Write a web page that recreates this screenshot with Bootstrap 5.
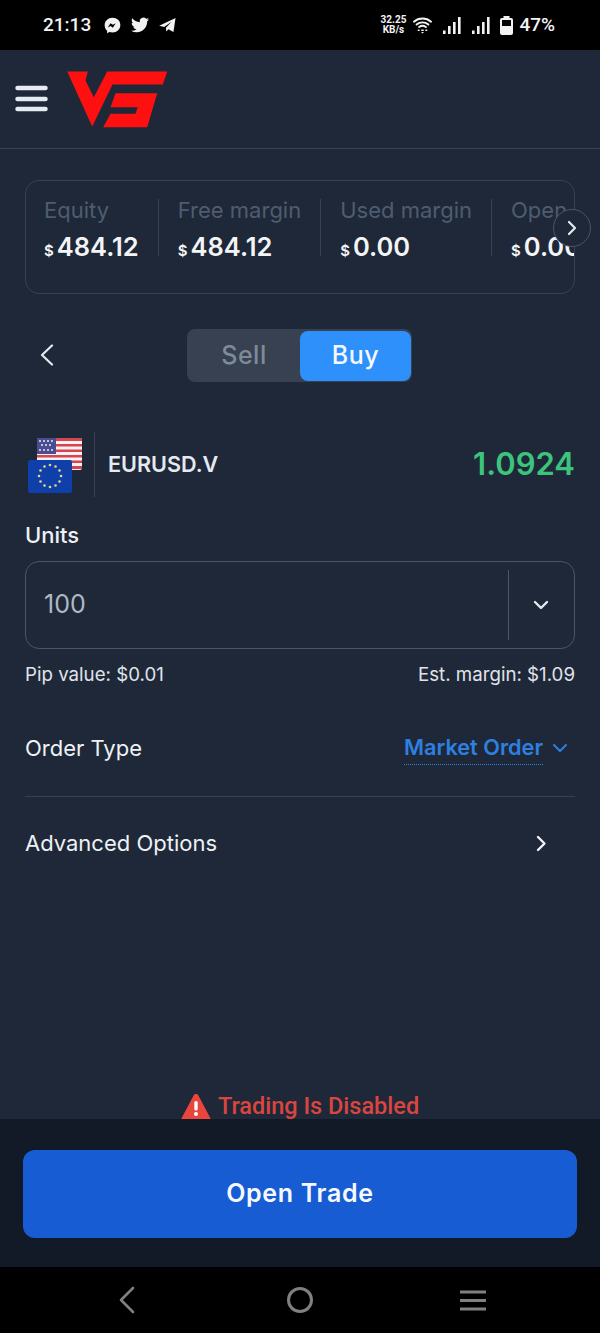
<!DOCTYPE html>
<html lang="en">
<head>
  <meta charset="UTF-8">
  <meta name="viewport" content="width=device-width, initial-scale=1.0">
  <title>Open Trade</title>
  <link href="https://cdn.jsdelivr.net/npm/bootstrap@5.3.0/dist/css/bootstrap.min.css" rel="stylesheet">
  <style>
    body {
      background-color: #1e2838;
      font-family: 'Inter', sans-serif;
      color: #e5e9f0;
    }
    .app-screen { height: 1333px; overflow: hidden; }

    .status-bar {
      height: 50px;
      background: #000;
      color: #f2f2f2;
      padding: 0 45px 0 43px;
      font-family: 'Roboto', sans-serif;
      font-weight: 500;
      font-size: 19px;
    }
    .net-speed { font-size: 10px; line-height: 10px; font-weight: 700; text-align: center; }
    .left-ico { margin-left: 10px; }
    .left-ico.first { margin-left: 13px; }
    .sig-ico { margin-left: 11px; }
    .wifi-ico { margin-left: 7px; }
    .batt-ico { margin-left: 10px; }
    .batt-pct { margin-left: 6px; }

    .top-header { height: 99px; border-bottom: 1px solid #374151; padding: 0 0 0 15px; }
    .brand-logo { margin-left: 19px; }

    .stats-box {
      height: 114px;
      margin: 31px 25px 0;
      border: 1px solid #374151;
      border-radius: 14px;
      padding: 16px 0 0 18px;
    }
    .stats-clip { overflow: hidden; height: 72px; padding-top: 2px; }
    .stat-item {
      height: 57px;
      flex: none;
      padding-right: 19px;
      margin-right: 19px;
      border-right: 1px solid #374151;
      white-space: nowrap;
    }
    .stat-item:last-child { border-right: 0; }
    .stat-label { font-size: 22px; line-height: 24px; margin-top: -1px; color: #4f5c70; }
    .stat-value { font-size: 25.5px; line-height: 26px; font-weight: 600; color: #f3f4f6; margin-top: 12px; }
    .stat-value span { font-size: 15px; font-weight: 600; margin-right: 3px; }
    .next-btn {
      position: absolute;
      left: 553px;
      top: 209px;
      width: 38px;
      height: 38px;
      border-radius: 50%;
      border: 1px solid #4b5563;
      background: #1e2838;
    }

    .side-row { height: 53px; margin: 35px 25px 0; }
    .back-link { position: absolute; left: 15px; top: 15px; }
    .side-switch { width: 225px; height: 53px; margin-left: -1px; background: #374151; border-radius: 8px; padding: 2px 1px 1px 0; }
    .side-opt { width: 113px; font-size: 25px; font-weight: 500; letter-spacing: .5px; color: #7f8a99; padding-left: 1px; }
    .side-opt.on { width: 111px; background: #2e90fa; color: #f5f9ff; border-radius: 8px; padding-left: 0; }

    .pair-row { height: 65px; margin: 50px 25px 0 27px; }
    .pair-flags { border-right: 1px solid #374151; width: 68px; height: 65px; }
    .pair-name { font-size: 21.6px; font-weight: 600; margin-left: 13px; color: #e5e9f0; }
    .pair-price { font-size: 31px; font-weight: 600; color: #3cc47c; }

    .form-part { padding: 0 25px; }
    .units-label { font-size: 22px; line-height: 28px; font-weight: 500; margin-top: 24px; color: #eef1f5; }
    .units-box {
      height: 88px;
      margin-top: 12px;
      border: 1px solid #4b5563;
      border-radius: 14px;
      padding-left: 18px;
      font-size: 25px;
      color: #b0b8c4;
    }
    .units-drop { width: 66px; height: 70px; border-left: 1px solid #4b5563; padding-right: 2px; }
    .hint-row { font-size: 18.7px; line-height: 22px; margin-top: 15px; color: #e0e4ea; }
    .order-row { margin-top: 45px; height: 34px; font-size: 22px; color: #eef1f5; }
    .order-link {
      color: #2e80e0;
      font-weight: 600;
      font-size: 21.7px;
      border-bottom: 1px dotted #2e80e0;
      line-height: 33px;
      height: 34px;
      margin-right: 9px;
    }
    .order-end { margin-right: 7px; }
    .line-sep { border-top: 1px solid #374151; margin-top: 31px; }
    .adv-row { font-size: 22px; height: 92px; padding-right: 28px; color: #eef1f5; }

    .warn-row { height: 26px; overflow: hidden; }
    .warn-text { font-family: 'Roboto', sans-serif; font-size: 23.5px; line-height: 27px; font-weight: 500; color: #d9453f; margin-left: 7px; }

    .action-bar { height: 148px; background: #131a27; padding: 31px 23px 0; }
    .open-btn {
      height: 88px;
      background: #175cd3;
      border: 0;
      border-radius: 12px;
      color: #f5f9ff;
      font-size: 25px;
      font-weight: 600;
      letter-spacing: .7px;
    }
    .open-btn:hover { background: #175cd3; color: #f5f9ff; }

    .nav-bar { height: 66px; background: #000; padding: 0 113px 0 118px; }
  </style>
</head>
<body>
  <div class="app-screen d-flex flex-column">

    <div class="status-bar d-flex align-items-center justify-content-between">
      <div class="d-flex align-items-center">
        <span>21:13</span>
        <svg class="left-ico first" width="17" height="17" viewBox="0 0 18 18"><path fill="#f2f2f2" d="M9 .8C4.3.8.7 4.2.7 8.700c0 2.400 1 4.400 2.600 5.800v2.700l2.500-1.400c1 .3 2.100.5 3.200.5 4.700 0 8.300-3.400 8.300-7.900S13.700.8 9 .8z"/><path fill="#000" d="M3.900 11.200l3-4.700 2.400 1.800 3.100-1.800-3 4.800-2.400-1.800z"/></svg>
        <svg class="left-ico" width="18" height="18" viewBox="0 0 24 24"><path fill="#f2f2f2" d="M23.953 4.57a10 10 0 01-2.825.775 4.958 4.958 0 002.163-2.723c-.951.555-2.005.959-3.127 1.184a4.92 4.92 0 00-8.384 4.482C7.69 8.095 4.067 6.13 1.64 3.162a4.822 4.822 0 00-.666 2.475c0 1.71.87 3.213 2.188 4.096a4.904 4.904 0 01-2.228-.616v.06a4.923 4.923 0 003.946 4.827 4.996 4.996 0 01-2.212.085 4.936 4.936 0 004.604 3.417 9.867 9.867 0 01-6.102 2.105c-.39 0-.779-.023-1.17-.067a13.995 13.995 0 007.557 2.209c9.053 0 13.998-7.496 13.998-13.985 0-.21 0-.42-.015-.63A9.935 9.935 0 0024 4.59z"/></svg>
        <svg class="left-ico" width="17" height="16" viewBox="0 0 18 16"><path fill="#f2f2f2" d="M.2 8.800L17.500.5 15.300 15.500 10 12.600 7.800 14.800 7.300 10.800 13.300 4.500 5.400 10z"/></svg>
      </div>
      <div class="d-flex align-items-center">
        <div class="net-speed">32.25<br>KB/s</div>
        <svg class="wifi-ico" width="19" height="18" viewBox="0 0 20 18" fill="none" stroke="#f2f2f2" stroke-width="2" stroke-linecap="round"><path d="M1 5.500c5-4.400 13-4.400 18 0M3.800 8.500c3.500-3 8.900-3 12.400 0M6.500 11.200c2-1.500 5-1.500 7 0"/><path stroke-width="1.400" d="M5.500 14.500h1M9.200 14.500h1.600M13.500 14.500h1M9.500 17h1"/></svg>
        <svg class="sig-ico" width="18" height="17" viewBox="0 0 18 17" fill="#f2f2f2"><rect x="0" y="13.500" width="2.600" height="3.500"/><rect x="5" y="9" width="2.600" height="8"/><rect x="10" y="5" width="2.600" height="12"/><rect x="15" y="0" width="2.600" height="17"/></svg>
        <svg class="sig-ico" width="18" height="17" viewBox="0 0 18 17" fill="#f2f2f2"><rect x="0" y="13.500" width="2.600" height="3.500"/><rect x="5" y="9" width="2.600" height="8"/><rect x="10" y="5" width="2.600" height="12"/><rect x="15" y="0" width="2.600" height="17"/></svg>
        <svg class="batt-ico" width="13" height="19" viewBox="0 0 13 19"><rect x="3.500" y="0" width="6" height="3" fill="#f2f2f2"/><rect x="0" y="2" width="13" height="17" rx="2" fill="#f2f2f2"/><rect x="2" y="4" width="9" height="6" fill="#000"/></svg>
        <span class="batt-pct">47%</span>
      </div>
    </div>

    <div class="top-header d-flex align-items-center">
      <svg width="33" height="28" viewBox="0 0 33 28" fill="none" stroke="#e5eaf3" stroke-width="4.500" stroke-linecap="round"><path d="M2.500 3h28M2.500 14h28M2.500 24h28"/></svg>
      <svg class="brand-logo" width="101" height="57" viewBox="66.500 70.500 101 57"><path fill="#ff1010" d="M66.700 71H87.300L85 80 93.300 96.700 106.700 71H166.700L162.300 84H112L91.700 126Z"/><path fill="#ff1010" d="M115 92.700H156.700L146.700 126.700H102.700L110 113.300H135L137.300 106.700H110Z"/></svg>
    </div>

    <div class="stats-box">
      <div class="stats-clip d-flex">
        <div class="stat-item d-flex flex-column">
          <div class="stat-label">Equity</div>
          <div class="stat-value"><span>$</span>484.12</div>
        </div>
        <div class="stat-item d-flex flex-column">
          <div class="stat-label">Free margin</div>
          <div class="stat-value"><span>$</span>484.12</div>
        </div>
        <div class="stat-item d-flex flex-column">
          <div class="stat-label">Used margin</div>
          <div class="stat-value"><span>$</span>0.00</div>
        </div>
        <div class="stat-item d-flex flex-column">
          <div class="stat-label">Open</div>
          <div class="stat-value"><span>$</span>0.00</div>
        </div>
      </div>
    </div>
    <div class="next-btn d-flex align-items-center justify-content-center">
      <svg width="12" height="16" viewBox="0 0 12 16" fill="none" stroke="#e5e9f0" stroke-width="2.200" stroke-linecap="round" stroke-linejoin="round"><path d="M3 2l6 6-6 6"/></svg>
    </div>

    <div class="side-row position-relative d-flex justify-content-center">
      <div class="back-link d-flex">
        <svg width="14" height="22" viewBox="0 0 14 22" fill="none" stroke="#e5e9f0" stroke-width="2.200" stroke-linecap="round" stroke-linejoin="round"><path d="M12 1.500L2 11l10 9.500"/></svg>
      </div>
      <div class="side-switch d-flex">
        <div class="side-opt d-flex align-items-center justify-content-center">Sell</div>
        <div class="side-opt on d-flex align-items-center justify-content-center">Buy</div>
      </div>
    </div>

    <div class="pair-row d-flex align-items-center">
      <div class="pair-flags">
        <svg width="56" height="65" viewBox="0 0 56 65">
          <rect x="10" y="6" width="45" height="32" rx="2" fill="#f3f3f5"/>
          <g fill="#d8434e">
            <rect x="10" y="6" width="45" height="3"/><rect x="10" y="12" width="45" height="2.500"/><rect x="10" y="17.500" width="45" height="2.500"/><rect x="10" y="23" width="45" height="2.500"/><rect x="10" y="28.500" width="45" height="2.500"/><rect x="10" y="34" width="45" height="3"/>
          </g>
          <rect x="10" y="6" width="19" height="16" fill="#4a4d8f"/>
          <g fill="#e8e8f0"><circle cx="13" cy="9" r="1"/><circle cx="17" cy="9" r="1"/><circle cx="21" cy="9" r="1"/><circle cx="25" cy="9" r="1"/><circle cx="15" cy="13" r="1"/><circle cx="19" cy="13" r="1"/><circle cx="23" cy="13" r="1"/><circle cx="13" cy="18" r="1"/><circle cx="17" cy="18" r="1"/><circle cx="21" cy="18" r="1"/><circle cx="25" cy="18" r="1"/></g>
          <rect x="1" y="28" width="44" height="33" rx="2" fill="#0f3fa8"/>
          <g fill="#e6d489"><circle cx="23" cy="33" r="1.300"/><circle cx="28.500" cy="34.500" r="1.300"/><circle cx="32.500" cy="38.500" r="1.300"/><circle cx="34" cy="44" r="1.300"/><circle cx="32.500" cy="49.500" r="1.300"/><circle cx="28.500" cy="53.500" r="1.300"/><circle cx="23" cy="55" r="1.300"/><circle cx="17.500" cy="53.500" r="1.300"/><circle cx="13.500" cy="49.500" r="1.300"/><circle cx="12" cy="44" r="1.300"/><circle cx="13.500" cy="38.500" r="1.300"/><circle cx="17.500" cy="34.500" r="1.300"/></g>
        </svg>
      </div>
      <div class="pair-name">EURUSD.V</div>
      <div class="pair-price ms-auto">1.0924</div>
    </div>

    <div class="form-part">
      <div class="units-label">Units</div>
      <div class="units-box d-flex align-items-center justify-content-between">
        <span>100</span>
        <div class="units-drop d-flex align-items-center justify-content-center">
          <svg width="16" height="10" viewBox="0 0 16 10" fill="none" stroke="#e5e9f0" stroke-width="2.400" stroke-linecap="round" stroke-linejoin="round"><path d="M2 2l6 6 6-6"/></svg>
        </div>
      </div>
      <div class="hint-row d-flex justify-content-between">
        <span>Pip value: $0.01</span>
        <span>Est. margin: $1.09</span>
      </div>
      <div class="order-row d-flex align-items-center justify-content-between">
        <span>Order Type</span>
        <div class="d-flex align-items-center">
          <span class="order-link">Market Order</span>
          <svg class="order-end" width="16" height="10" viewBox="0 0 16 10" fill="none" stroke="#2e80e0" stroke-width="2" stroke-linecap="round" stroke-linejoin="round"><path d="M2 2l6 6 6-6"/></svg>
        </div>
      </div>
      <div class="line-sep"></div>
      <div class="adv-row d-flex align-items-center justify-content-between">
        <span>Advanced Options</span>
        <svg width="11" height="17" viewBox="0 0 11 17" fill="none" stroke="#f0f2f5" stroke-width="2.400" stroke-linecap="round" stroke-linejoin="round"><path d="M2 2l6.500 6.500L2 15"/></svg>
      </div>
    </div>

    <div class="warn-row mt-auto d-flex justify-content-center">
      <svg width="30" height="30" viewBox="0 0 30 30" class="flex-shrink-0"><path fill="#e8453c" d="M15 1c1 0 1.900.5 2.400 1.400l11.800 22.300c1 1.900-.4 4.300-2.500 4.300H3.300C1.200 29-.200 26.600.8 24.700L12.600 2.400C13.100 1.500 14 1 15 1z"/><rect x="13.300" y="8" width="3.400" height="9.500" rx="1.500" fill="#fff"/><circle cx="15" cy="21" r="2" fill="#fff"/></svg>
      <span class="warn-text">Trading Is Disabled</span>
    </div>

    <div class="action-bar">
      <button class="btn open-btn w-100" type="button">Open Trade</button>
    </div>

    <div class="nav-bar d-flex align-items-center justify-content-between">
      <svg width="23" height="28" viewBox="0 0 23 28" fill="none" stroke="#808080" stroke-width="2.600" stroke-linecap="round" stroke-linejoin="round"><path d="M15 2L3 14l12 12"/></svg>
      <svg width="28" height="28" viewBox="0 0 28 28" fill="none" stroke="#808080" stroke-width="3"><circle cx="14" cy="14" r="11.500"/></svg>
      <svg width="28" height="21" viewBox="0 0 28 21" fill="none" stroke="#808080" stroke-width="3"><path d="M1 2h26M1 10.500h26M1 19h26"/></svg>
    </div>
  </div>
  <script src="https://cdn.jsdelivr.net/npm/bootstrap@5.3.0/dist/js/bootstrap.bundle.min.js"></script>
</body>
</html>
